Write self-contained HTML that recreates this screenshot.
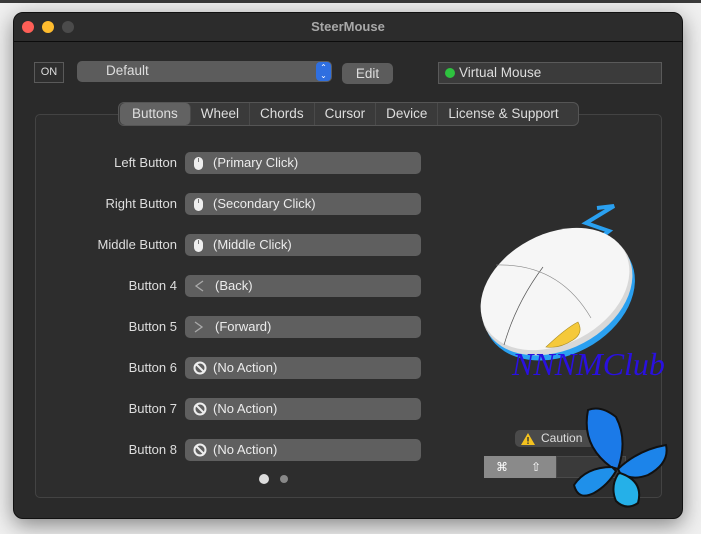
<!DOCTYPE html>
<html><head><meta charset="utf-8"><style>
*{box-sizing:border-box;margin:0;padding:0}
body{width:701px;height:534px;background:#f0f0f0;position:relative;overflow:hidden;font-family:"Liberation Sans",sans-serif;font-size:13px;color:#dedede}
.topbar{position:absolute;left:0;top:0;width:701px;height:3px;background:#3a3a3a}
.win{position:absolute;left:13px;top:12px;width:670px;height:507px;background:#2a2a2a;border:1px solid #111;border-radius:10px;box-shadow:0 6px 22px rgba(0,0,0,.45);overflow:hidden}
.title{height:29px;border-bottom:1px solid #0c0c0c;background:#2c2c2c;text-align:center;line-height:28px;font-weight:bold;color:#a8a8a8;font-size:13px}
.dot{position:absolute;top:8px;width:12px;height:12px;border-radius:50%}
.abs{position:absolute}
.panel{position:absolute;left:21px;top:101px;width:627px;height:384px;border:1px solid #434343;border-radius:5px;background:#2d2d2d}
.lbl{position:absolute;width:163px;text-align:right;left:0}
.fld{position:absolute;left:171px;width:236px;height:22px;background:#5f5f5f;border-radius:5px;line-height:22px;padding-left:28px;color:#ececec}
.ic{position:absolute;left:8px;top:4px}
.tabs{position:absolute;left:104px;top:89px;height:24px;width:461px;background:#3a3a3a;border:1px solid #555;border-radius:6px;display:flex;align-items:center;font-size:13.5px;white-space:nowrap;overflow:hidden}
.tabs span{padding:0 10px;border-right:1px solid #4a4a4a;height:22px;line-height:22px;flex:none}
</style></head><body>
<div class="topbar"></div>
<div class="win">
<div class="title">SteerMouse</div>
<div class="dot" style="left:8px;background:#fe5f57"></div>
<div class="dot" style="left:28px;background:#febc2e"></div>
<div class="dot" style="left:48px;background:#4b4b4b"></div>

<div class="abs" style="left:20px;top:49px;width:30px;height:21px;border:1px solid #5a5a5a;background:#2e2e2e;font-size:11px;text-align:center;line-height:19px">ON</div>
<div class="abs" style="left:63px;top:48px;width:255px;height:21px;background:#5c5c5c;border-radius:5px;line-height:19px;padding-left:29px;font-size:13.5px">Default</div>
<div class="abs" style="left:302px;top:49px;width:15px;height:19px;background:#2f6fe0;border-radius:4px;color:#fff;font-size:8px;text-align:center;line-height:8px;padding-top:2px">⌃<br>⌄</div>
<div class="abs" style="left:328px;top:50px;width:51px;height:21px;background:#5c5c5c;border-radius:5px;text-align:center;line-height:21px;font-size:13.5px">Edit</div>
<div class="abs" style="left:424px;top:49px;width:224px;height:22px;border:1px solid #5a5a5a;background:#3b3b3b;line-height:20px;padding-left:20px;font-size:13.5px">Virtual Mouse</div>
<div class="abs" style="left:431px;top:55px;width:10px;height:10px;border-radius:50%;background:#2ec23f"></div>

<div class="panel"></div>
<div class="tabs">
<span style="background:#626262;border-radius:5px;margin-left:1px;padding:0 12px">Buttons</span><span>Wheel</span><span>Chords</span><span>Cursor</span><span>Device</span><span style="border:none">License &amp; Support</span>
</div>

<div class="lbl" style="top:142px">Left Button</div>
<div class="fld" style="top:139px"><svg class="ic" width="12" height="15"><rect x="1" y="1" width="9" height="13" rx="4.5" fill="#eee"/><line x1="5.5" y1="2" x2="5.5" y2="6" stroke="#777"/></svg>(Primary Click)</div>
<div class="lbl" style="top:183px">Right Button</div>
<div class="fld" style="top:180px"><svg class="ic" width="12" height="15"><rect x="1" y="1" width="9" height="13" rx="4.5" fill="#eee"/><line x1="5.5" y1="2" x2="5.5" y2="6" stroke="#777"/></svg>(Secondary Click)</div>
<div class="lbl" style="top:224px">Middle Button</div>
<div class="fld" style="top:221px"><svg class="ic" width="12" height="15"><rect x="1" y="1" width="9" height="13" rx="4.5" fill="#eee"/><line x1="5.5" y1="2" x2="5.5" y2="6" stroke="#777"/></svg>(Middle Click)</div>
<div class="lbl" style="top:265px">Button 4</div>
<div class="fld" style="top:262px;padding-left:30px"><svg class="ic" width="12" height="14"><path d="M10 2 L3 7 L10 12" stroke="#aaa" stroke-width="1.3" fill="none"/></svg>(Back)</div>
<div class="lbl" style="top:306px">Button 5</div>
<div class="fld" style="top:303px;padding-left:30px"><svg class="ic" width="12" height="14"><path d="M2 2 L9 7 L2 12" stroke="#aaa" stroke-width="1.3" fill="none"/></svg>(Forward)</div>
<div class="lbl" style="top:347px">Button 6</div>
<div class="fld" style="top:344px"><svg class="ic" width="14" height="14"><circle cx="7" cy="7" r="5.5" stroke="#eee" stroke-width="2" fill="none"/><line x1="3" y1="3" x2="11" y2="11" stroke="#eee" stroke-width="2"/></svg>(No Action)</div>
<div class="lbl" style="top:388px">Button 7</div>
<div class="fld" style="top:385px"><svg class="ic" width="14" height="14"><circle cx="7" cy="7" r="5.5" stroke="#eee" stroke-width="2" fill="none"/><line x1="3" y1="3" x2="11" y2="11" stroke="#eee" stroke-width="2"/></svg>(No Action)</div>
<div class="lbl" style="top:429px">Button 8</div>
<div class="fld" style="top:426px"><svg class="ic" width="14" height="14"><circle cx="7" cy="7" r="5.5" stroke="#eee" stroke-width="2" fill="none"/><line x1="3" y1="3" x2="11" y2="11" stroke="#eee" stroke-width="2"/></svg>(No Action)</div>

<div class="abs" style="left:245px;top:461px;width:10px;height:10px;border-radius:50%;background:#ddd"></div>
<div class="abs" style="left:266px;top:462px;width:8px;height:8px;border-radius:50%;background:#888"></div>

<!-- mouse -->
<svg class="abs" style="left:440px;top:190px" width="200" height="180">
<path d="M143 5 L160 3 L132 20 L155 28 L142 38" stroke="#2aa0f0" stroke-width="4" fill="none"/>
<g transform="translate(101,86) rotate(-28)">
<ellipse cx="0" cy="9" rx="80" ry="58" fill="#2aa0f0"/>
<ellipse cx="0" cy="4" rx="80" ry="57" fill="#d8d8d8"/>
<ellipse cx="0" cy="0" rx="79" ry="55" fill="#f6f6f6"/>
</g>
<path d="M89 64 Q62 100 50 142" stroke="#555" stroke-width=".7" fill="none"/>
<path d="M42 62 Q105 60 137 115" stroke="#888" stroke-width=".6" fill="none"/>
<path d="M92 144 Q112 125 124 119 Q130 130 119 137 Q105 146 92 144Z" fill="#f5c93a" stroke="#a88a20" stroke-width=".6"/>
</svg>
<div class="abs" style="left:498px;top:333px;font-family:'Liberation Serif',serif;font-style:italic;font-size:32px;color:#2a10e0">NNNMClub</div>

<div class="abs" style="left:501px;top:417px;width:80px;height:17px;background:#4a4a4a;border-radius:5px;font-size:12px;line-height:17px;padding-left:26px">Caution</div>
<svg class="abs" style="left:507px;top:420px" width="14" height="12"><path d="M7 0 L14 12 L0 12Z" fill="#f4c21f"/><rect x="6.3" y="4" width="1.4" height="4.5" fill="#333"/><rect x="6.3" y="9.5" width="1.4" height="1.4" fill="#333"/></svg>
<div class="abs" style="left:470px;top:443px;width:72px;height:22px;background:#8a8a8a;color:#fff;font-size:12px;line-height:22px"><span style="position:absolute;left:12px">⌘</span><span style="position:absolute;left:47px">⇧</span></div>
<div class="abs" style="left:542px;top:443px;width:70px;height:22px;background:#3a3a3a;border:1px solid #4a4a4a"></div>
<!-- butterfly -->
<svg class="abs" style="left:552px;top:392px" width="110" height="105">
<path d="M45 62 Q15 40 22 5 Q35 0 50 12 Q62 35 52 64Z" fill="#1b7ae8" stroke="#111" stroke-width="2"/>
<path d="M46 62 Q20 62 8 80 Q12 96 28 88 Q42 80 50 66Z" fill="#1f90ea" stroke="#111" stroke-width="2"/>
<path d="M52 64 Q72 45 100 40 Q104 58 82 70 Q66 76 54 68Z" fill="#1c84ea" stroke="#111" stroke-width="2"/>
<path d="M54 68 Q78 76 72 98 Q60 106 50 96 Q44 82 52 69Z" fill="#25b0e8" stroke="#111" stroke-width="2"/>
</svg>
</div>
</body></html>
